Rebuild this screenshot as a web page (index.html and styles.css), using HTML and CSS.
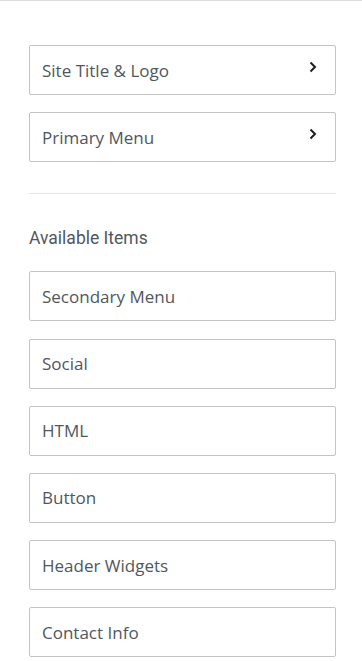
FILE: index.html
```html
<!DOCTYPE html>
<html lang="en">
<head>
    <meta charset="UTF-8">
    <meta name="viewport" content="width=device-width, initial-scale=1.0">
    <title>Header Builder</title>
    <link rel="stylesheet" href="styles.css">
</head>
<body>
<div class="panel">
    <div class="group group-active">
        <div class="item item-link">
            <span class="item-label">Site Title &amp; Logo</span>
            <svg class="item-arrow" width="8" height="12" viewBox="0 0 8 12"><path d="M1.5 1.5 L6 6 L1.5 10.5" fill="none" stroke="#1e1e1e" stroke-width="2"/></svg>
        </div>
        <div class="item item-link">
            <span class="item-label">Primary Menu</span>
            <svg class="item-arrow" width="8" height="12" viewBox="0 0 8 12"><path d="M1.5 1.5 L6 6 L1.5 10.5" fill="none" stroke="#1e1e1e" stroke-width="2"/></svg>
        </div>
    </div>
    <div class="group group-available">
        <div class="group-title">Available Items</div>
        <div class="item"><span class="item-label">Secondary Menu</span></div>
        <div class="item"><span class="item-label">Social</span></div>
        <div class="item"><span class="item-label">HTML</span></div>
        <div class="item"><span class="item-label">Button</span></div>
        <div class="item"><span class="item-label">Header Widgets</span></div>
        <div class="item"><span class="item-label">Contact Info</span></div>
    </div>
</div>
</body>
</html>
```

FILE: styles.css
```css
html,
body {
    margin: 0;
    padding: 0;
    background-color: #ffffff;
}
.panel {
    border-top: 1px solid #dcdcde;
    padding: 44px 26px 0 29px;
}
.group {
    display: flex;
    flex-direction: column;
    gap: 17.2px;
}
.group-active {
    padding-bottom: 31px;
    border-bottom: 1px solid #e6e6e6;
}
.group-available {
    padding-top: 33px;
}
.group-title {
    font-family: Roboto, sans-serif;
    font-size: 17.5px;
    color: #50575e;
    line-height: 22px;
    margin-bottom: 5px;
}
.item {
    box-sizing: border-box;
    height: 50px;
    display: flex;
    align-items: center;
    justify-content: space-between;
    padding: 0 18px 0 12px;
    border: 1px solid #c3c4c7;
    border-radius: 2px;
    font-family: "Open Sans", sans-serif;
    font-size: 17px;
    color: #50575e;
}
.item-arrow {
    margin-top: -6px;
}
```
